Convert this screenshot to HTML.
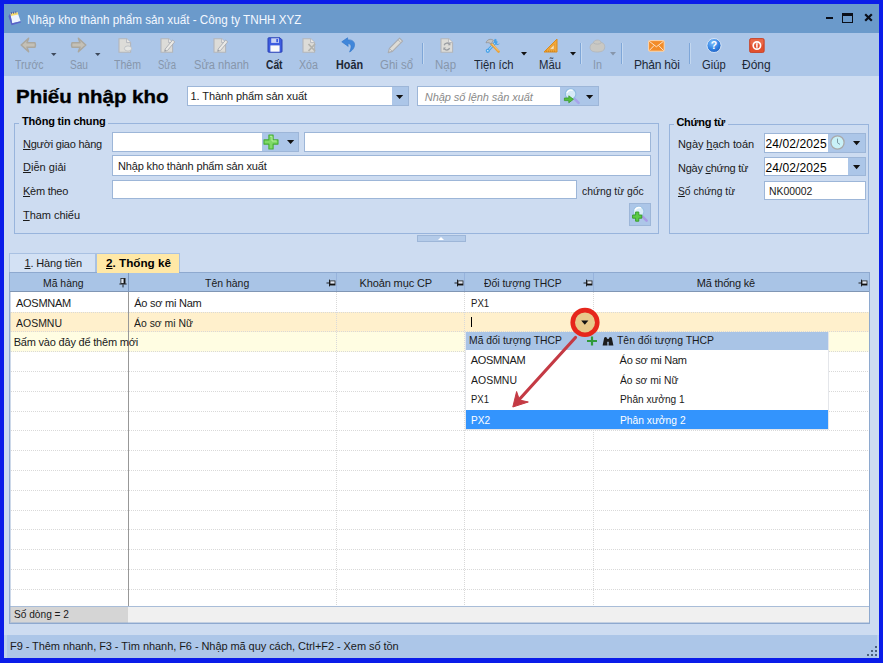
<!DOCTYPE html>
<html lang="vi"><head><meta charset="utf-8"><title>Nhập kho thành phẩm sản xuất - Công ty TNHH XYZ</title>
<style>
html,body{margin:0;padding:0;}
body{width:883px;height:663px;overflow:hidden;background:#0a1ce9;font-family:"Liberation Sans", sans-serif;font-size:11px;position:relative;}
#app div,#app span,#app svg{position:absolute;}
#app .t{line-height:20px;height:20px;white-space:nowrap;}
#app u{text-decoration:underline;}
</style></head>
<body><div id="app" style="position:absolute;left:0;top:0;width:883px;height:663px;overflow:hidden;">
<div style="left:4px;top:4px;width:875px;height:654px;background:#cddcf1;"></div>
<div style="left:4px;top:4px;width:875px;height:29px;background:#6b9acb;"></div>
<div style="left:4px;top:33px;width:875px;height:42.5px;background:#acc6e8;"></div>
<div style="left:4px;top:634.5px;width:875px;height:23.5px;background:#bdd1ec;"></div>
<div style="left:6.5px;top:634.5px;width:870.5px;height:23.5px;background:#acc6e8;"></div>
<div style="left:826px;top:17px;width:7px;height:2px;background:#0a0f1a;"></div>
<div style="left:842px;top:13px;width:11px;height:10px;border:1px solid #0a0f1a;border-top:3px solid #0a0f1a;box-sizing:border-box;"></div>
<svg style="left:864px;top:13px" width="9" height="9" viewBox="0 0 9 9"><path d="M1.2 1.2 L7.8 7.8 M7.8 1.2 L1.2 7.8" stroke="#0a0f1a" stroke-width="2.2" fill="none"/></svg>
<div style="left:422px;top:43px;width:1px;height:21px;background:#7ea6d8;"></div>
<div style="left:423px;top:43px;width:1px;height:21px;background:#c4d8f0;"></div>
<div style="left:580px;top:43px;width:1px;height:21px;background:#7ea6d8;"></div>
<div style="left:581px;top:43px;width:1px;height:21px;background:#c4d8f0;"></div>
<div style="left:621px;top:43px;width:1px;height:21px;background:#7ea6d8;"></div>
<div style="left:622px;top:43px;width:1px;height:21px;background:#c4d8f0;"></div>
<div style="left:689px;top:43px;width:1px;height:21px;background:#7ea6d8;"></div>
<div style="left:690px;top:43px;width:1px;height:21px;background:#c4d8f0;"></div>
<svg style="left:50.05px;top:52px" width="7.5" height="5" viewBox="0 0 7.5 5"><path d="M1 1 H6.5 L3.75 4 Z" fill="#3e4a5c"/></svg>
<svg style="left:93.75px;top:52px" width="7.5" height="5" viewBox="0 0 7.5 5"><path d="M1 1 H6.5 L3.75 4 Z" fill="#3e4a5c"/></svg>
<svg style="left:520px;top:51.1px" width="8" height="5.4" viewBox="0 0 8 5.4"><path d="M1 1 H7 L4 4.4 Z" fill="#111"/></svg>
<svg style="left:568.8px;top:51.1px" width="8" height="5.4" viewBox="0 0 8 5.4"><path d="M1 1 H7 L4 4.4 Z" fill="#111"/></svg>
<svg style="left:609px;top:51.1px" width="8" height="5.4" viewBox="0 0 8 5.4"><path d="M1 1 H7 L4 4.4 Z" fill="#8796ab"/></svg>
<div style="left:187px;top:86px;width:221.5px;height:20px;background:#fff;border:1px solid #9db6d8;box-sizing:border-box;"></div>
<div style="left:391.5px;top:87px;width:16px;height:18px;background:#acc6e8;"></div>
<svg style="left:395px;top:94px" width="9.2" height="6" viewBox="0 0 9.2 6"><path d="M1 1 H8.2 L4.6 5 Z" fill="#111"/></svg>
<div style="left:416.7px;top:86px;width:182px;height:20px;background:#acc6e8;border:1px solid #9db6d8;box-sizing:border-box;"></div>
<div style="left:417.7px;top:87px;width:142.3px;height:18px;background:#fff;"></div>
<svg style="left:585px;top:94px" width="9.2" height="6" viewBox="0 0 9.2 6"><path d="M1 1 H8.2 L4.6 5 Z" fill="#111"/></svg>
<div style="left:14px;top:123px;width:645px;height:111px;border:1px solid #98b4dc;box-sizing:border-box;"></div>
<div style="left:19px;top:116px;width:89px;height:14px;background:#cddcf1;"></div>
<div style="left:112px;top:132px;width:187px;height:20px;background:#acc6e8;border:1px solid #9db6d8;box-sizing:border-box;"></div>
<div style="left:113px;top:133px;width:149px;height:18px;background:#fff;"></div>
<svg style="left:286.1px;top:139.3px" width="9.2" height="6" viewBox="0 0 9.2 6"><path d="M1 1 H8.2 L4.6 5 Z" fill="#111"/></svg>
<div style="left:304px;top:132px;width:347px;height:20px;background:#fff;border:1px solid #9db6d8;box-sizing:border-box;"></div>
<div style="left:112px;top:155px;width:539px;height:21px;background:#fff;border:1px solid #9db6d8;box-sizing:border-box;"></div>
<div style="left:112px;top:180px;width:465px;height:19px;background:#fff;border:1px solid #9db6d8;box-sizing:border-box;"></div>
<div style="left:629px;top:203px;width:22px;height:22.5px;background:#acc6e8;border:1px solid #9db6d8;box-sizing:border-box;"></div>
<div style="left:416.5px;top:235px;width:49.5px;height:7px;background:#b4cbe9;border:1px solid #9db6d8;box-sizing:border-box;"></div>
<div style="left:437.5px;top:237px;width:0;height:0;border-left:3.5px solid transparent;border-right:3.5px solid transparent;border-bottom:3.5px solid #fff;"></div>
<div style="left:669px;top:124px;width:200px;height:110px;border:1px solid #98b4dc;box-sizing:border-box;"></div>
<div style="left:673.5px;top:118px;width:54.5px;height:14px;background:#cddcf1;"></div>
<div style="left:763.5px;top:133px;width:102.5px;height:19.5px;background:#acc6e8;border:1px solid #9db6d8;box-sizing:border-box;"></div>
<div style="left:764.5px;top:134px;width:63.5px;height:17.5px;background:#fff;"></div>
<svg style="left:852.1px;top:140.3px" width="9.2" height="6.2" viewBox="0 0 9.2 6.2"><path d="M1 1 H8.2 L4.6 5.2 Z" fill="#111"/></svg>
<div style="left:763.5px;top:156.5px;width:102.5px;height:19.5px;background:#acc6e8;border:1px solid #9db6d8;box-sizing:border-box;"></div>
<div style="left:764.5px;top:157.5px;width:83.5px;height:17.5px;background:#fff;"></div>
<svg style="left:852.1px;top:163.8px" width="9.2" height="6.2" viewBox="0 0 9.2 6.2"><path d="M1 1 H8.2 L4.6 5.2 Z" fill="#111"/></svg>
<div style="left:763.5px;top:180.5px;width:102.5px;height:19.5px;background:#fff;border:1px solid #9db6d8;box-sizing:border-box;"></div>
<div style="left:9px;top:253px;width:86.5px;height:20px;background:#d3e1f4;border:1px solid #a9c1e2;border-bottom:none;box-sizing:border-box;"></div>
<div style="left:95.5px;top:253px;width:84.5px;height:20.5px;background:#ffe8a6;border:1px solid #a9c1e2;border-bottom:none;box-sizing:border-box;"></div>
<div style="left:9px;top:272px;width:860.5px;height:351.5px;background:#fff;"></div>
<div style="left:9px;top:272px;width:860.5px;height:20.3px;background:#a9c4e6;border-bottom:1px solid #8096b4;box-sizing:border-box;"></div>
<div style="left:9px;top:312.1px;width:860.5px;height:19.8px;background:#fff0cc;"></div>
<div style="left:9px;top:331.9px;width:860.5px;height:19.8px;background:#fffde2;"></div>
<div style="left:9px;top:311.6px;width:860.5px;height:1px;border-top:1px dotted #d9d9d9;"></div>
<div style="left:9px;top:331.4px;width:860.5px;height:1px;border-top:1px dotted #d9d9d9;"></div>
<div style="left:9px;top:351.2px;width:860.5px;height:1px;border-top:1px dotted #d9d9d9;"></div>
<div style="left:9px;top:371px;width:860.5px;height:1px;border-top:1px dotted #d9d9d9;"></div>
<div style="left:9px;top:390.8px;width:860.5px;height:1px;border-top:1px dotted #d9d9d9;"></div>
<div style="left:9px;top:410.6px;width:860.5px;height:1px;border-top:1px dotted #d9d9d9;"></div>
<div style="left:9px;top:430.4px;width:860.5px;height:1px;border-top:1px dotted #d9d9d9;"></div>
<div style="left:9px;top:450.2px;width:860.5px;height:1px;border-top:1px dotted #d9d9d9;"></div>
<div style="left:9px;top:470px;width:860.5px;height:1px;border-top:1px dotted #d9d9d9;"></div>
<div style="left:9px;top:489.8px;width:860.5px;height:1px;border-top:1px dotted #d9d9d9;"></div>
<div style="left:9px;top:509.6px;width:860.5px;height:1px;border-top:1px dotted #d9d9d9;"></div>
<div style="left:9px;top:529.4px;width:860.5px;height:1px;border-top:1px dotted #d9d9d9;"></div>
<div style="left:9px;top:549.2px;width:860.5px;height:1px;border-top:1px dotted #d9d9d9;"></div>
<div style="left:9px;top:569px;width:860.5px;height:1px;border-top:1px dotted #d9d9d9;"></div>
<div style="left:9px;top:588.8px;width:860.5px;height:1px;border-top:1px dotted #d9d9d9;"></div>
<div style="left:335.8px;top:292.3px;width:1px;height:313.2px;border-left:1px dotted #d9d9d9;"></div>
<div style="left:335.8px;top:273px;width:1px;height:18.3px;background:#97b3dc;"></div>
<div style="left:464.2px;top:292.3px;width:1px;height:313.2px;border-left:1px dotted #d9d9d9;"></div>
<div style="left:464.2px;top:273px;width:1px;height:18.3px;background:#97b3dc;"></div>
<div style="left:592.5px;top:292.3px;width:1px;height:313.2px;border-left:1px dotted #d9d9d9;"></div>
<div style="left:592.5px;top:273px;width:1px;height:18.3px;background:#97b3dc;"></div>
<div style="left:127.5px;top:292.3px;width:1.5px;height:331.2px;background:#989898;"></div>
<div style="left:127.5px;top:272px;width:1.5px;height:20.3px;background:#7b97bf;"></div>
<div style="left:9px;top:605.5px;width:860.5px;height:18px;background:#f0f0f0;border-top:1px solid #a9bdd8;box-sizing:border-box;"></div>
<div style="left:9px;top:606.5px;width:118.5px;height:17px;background:#d5d5d5;"></div>
<div style="left:9px;top:272px;width:860.5px;height:351.5px;border:1px solid #8ea9cf;box-sizing:border-box;"></div>
<div style="left:10px;top:292.3px;width:1px;height:330.2px;background:rgba(142,169,207,0.45);"></div>
<div style="left:10px;top:621.5px;width:858.5px;height:1px;background:rgba(142,169,207,0.45);"></div>
<div style="left:96.5px;top:271px;width:82.5px;height:2.4px;background:#ffe8a6;"></div>
<div style="left:470.5px;top:316.5px;width:1px;height:10.5px;background:#000;"></div>
<div style="left:575px;top:313px;width:18px;height:18.5px;background:#e6c88c;"></div>
<svg style="left:580.5px;top:319.5px" width="9" height="6" viewBox="0 0 9 6"><path d="M1 1 H8 L4.5 5 Z" fill="#111"/></svg>
<div style="left:465px;top:331.6px;width:364px;height:98.9px;background:#fff;border:1px solid #e4e6ea;box-sizing:border-box;"></div>
<div style="left:466px;top:331.6px;width:362px;height:18.2px;background:#a9c4e6;"></div>
<div style="left:466px;top:409.5px;width:362px;height:19.9px;background:#3394fd;"></div>
<svg style="left:0;top:0" width="883" height="663" viewBox="0 0 883 663"><circle cx="585" cy="322.4" r="12.3" fill="#e8c98b" stroke="#e6261c" stroke-width="4.6"/><path d="M581.2 320.6 h7.2 l-3.6 4.2 Z" fill="#111"/><path d="M575.5 337.5 L517 402" stroke="#c43a44" stroke-width="3.2" fill="none" stroke-linecap="round"/><path d="M516.6 391.5 L512.8 407 L528.3 402 L519.5 400 Z" fill="#c43a44" stroke="#c43a44" stroke-width="1" stroke-linejoin="round"/></svg>
<div style="left:874.5px;top:654px;width:2px;height:2px;background:#4a607e;"></div>
<div style="left:870.5px;top:654px;width:2px;height:2px;background:#4a607e;"></div>
<div style="left:866.5px;top:654px;width:2px;height:2px;background:#4a607e;"></div>
<div style="left:874.5px;top:650px;width:2px;height:2px;background:#4a607e;"></div>
<div style="left:870.5px;top:650px;width:2px;height:2px;background:#4a607e;"></div>
<div style="left:874.5px;top:646px;width:2px;height:2px;background:#4a607e;"></div>
<svg style="left:7px;top:10px" width="15" height="17" viewBox="0 0 15 17"><path d="M3.2 3.5 L10.5 2.2 L13.6 11.2 L5.2 13.2 Z" fill="#eef4ff"/><path d="M3.2 3.5 L10.5 2.2 L11.2 4.4 L3.9 6 Z" fill="#f7dc6a"/><path d="M3.2 3.5 L5.2 13.2 L13.6 11.2 L13.9 12.6 L4.6 15.3 L1.4 6.2 Z" fill="#5a62c8"/><path d="M4.4 2.2 v2 M6.6 1.8 v2 M8.8 1.4 v2" stroke="#4a4f9a" stroke-width="0.9"/></svg>
<svg style="left:20px;top:37px" width="17" height="16" viewBox="0 0 17 16"><path d="M8.6 1.2 L1.2 8 L8.6 14.8 L7 10.2 L15 10.2 Q16 8 15 5.8 L7 5.8 Z" fill="#c4c0b6" stroke="#aaa79f" stroke-width="1.5" stroke-linejoin="round"/></svg>
<svg style="left:69.5px;top:37px" width="17" height="16" viewBox="0 0 17 16"><path d="M8.4 1.2 L15.8 8 L8.4 14.8 L10 10.2 L2 10.2 Q1 8 2 5.8 L10 5.8 Z" fill="#c4c0b6" stroke="#aaa79f" stroke-width="1.5" stroke-linejoin="round"/></svg>
<svg style="left:118px;top:38px" width="15" height="15" viewBox="0 0 15 15"><path d="M1 0.7 H8.6 L12.6 4.6 V14.2 H1 Z" fill="#dddcd8" stroke="#b3b6bb" stroke-width="1.1"/><path d="M8.6 0.7 V4.6 H12.6" fill="#ecebe8" stroke="#b3b6bb" stroke-width="0.9"/><ellipse cx="10" cy="10.5" rx="3.6" ry="2.6" fill="#e6e6e3" stroke="#b9bcc0" stroke-width="0.8"/></svg>
<svg style="left:159.5px;top:38px" width="15" height="15" viewBox="0 0 15 15"><path d="M1 0.7 H8.6 L12.6 4.6 V14.2 H1 Z" fill="#dddcd8" stroke="#b3b6bb" stroke-width="1.1"/><path d="M8.6 0.7 V4.6 H12.6" fill="#ecebe8" stroke="#b3b6bb" stroke-width="0.9"/><path d="M5.2 11 L12.6 2 L14.8 3.8 L7.4 12.6 L4.6 13.4 Z" fill="#ebeae6" stroke="#a9adb3" stroke-width="0.9" stroke-linejoin="round"/><path d="M4.6 13.4 L5 11.6 L6.6 12.8 Z" fill="#9a9da2"/></svg>
<svg style="left:213px;top:38px" width="15" height="15" viewBox="0 0 15 15"><path d="M1 0.7 H8.6 L12.6 4.6 V14.2 H1 Z" fill="#dddcd8" stroke="#b3b6bb" stroke-width="1.1"/><path d="M8.6 0.7 V4.6 H12.6" fill="#ecebe8" stroke="#b3b6bb" stroke-width="0.9"/><path d="M5.2 11 L12.6 2 L14.8 3.8 L7.4 12.6 L4.6 13.4 Z" fill="#ebeae6" stroke="#a9adb3" stroke-width="0.9" stroke-linejoin="round"/><path d="M4.6 13.4 L5 11.6 L6.6 12.8 Z" fill="#9a9da2"/></svg>
<svg style="left:266.5px;top:37px" width="16" height="16" viewBox="0 0 16 16"><path d="M1 1.5 Q1 0.8 1.8 0.8 H13 L15 2.8 V14.4 Q15 15.2 14.2 15.2 H1.8 Q1 15.2 1 14.4 Z" fill="#3d5ce0" stroke="#2a41b4" stroke-width="1"/><rect x="4.2" y="1.3" width="7.8" height="4.6" fill="#c9d3f4"/><rect x="9.3" y="2" width="1.8" height="3.2" fill="#3d5ce0"/><rect x="3.4" y="8.4" width="9.2" height="6.3" fill="#fafafa"/></svg>
<svg style="left:302px;top:38px" width="15" height="15" viewBox="0 0 15 15"><path d="M1 0.7 H8.6 L12.6 4.6 V14.2 H1 Z" fill="#dddcd8" stroke="#b3b6bb" stroke-width="1.1"/><path d="M8.6 0.7 V4.6 H12.6" fill="#ecebe8" stroke="#b3b6bb" stroke-width="0.9"/><path d="M6.5 6 L13 13 M13 6 L6.5 13" stroke="#b3b3ae" stroke-width="1.8"/></svg>
<svg style="left:341px;top:37px" width="16" height="16" viewBox="0 0 16 16"><path d="M6.6 0.8 L0.8 4.8 L7.2 9.4 L6.8 6.8 C10 6.4 11.4 9 8.6 15 C15.4 11.4 15.6 2 6.7 3 Z" fill="#3f86da" stroke="#3378cc" stroke-width="0.7" stroke-linejoin="round"/></svg>
<svg style="left:387px;top:36.5px" width="17" height="17" viewBox="0 0 17 17"><path d="M1.2 15.6 L2.4 11.4 L12.6 1.2 L15.6 4.2 L5.4 14.4 Z" fill="#dedcd6" stroke="#a9acb2" stroke-width="1.1" stroke-linejoin="round"/><path d="M2.4 11.4 L5.4 14.4 M11 2.8 L14 5.8" stroke="#a9acb2" stroke-width="0.8"/></svg>
<svg style="left:439.5px;top:38px" width="15" height="15" viewBox="0 0 15 15"><path d="M1 0.7 H8.6 L12.6 4.6 V14.2 H1 Z" fill="#dddcd8" stroke="#b3b6bb" stroke-width="1.1"/><path d="M8.6 0.7 V4.6 H12.6" fill="#ecebe8" stroke="#b3b6bb" stroke-width="0.9"/><path d="M4.2 7.2 A3 3 0 0 1 9.6 6.4 M9.6 10 A3 3 0 0 1 4.2 10.6" fill="none" stroke="#9a9da2" stroke-width="1.3"/><path d="M10.4 4.6 V7.2 H7.8 Z M3.4 12.2 V9.6 H6 Z" fill="#9a9da2"/></svg>
<svg style="left:484.5px;top:38px" width="16" height="15" viewBox="0 0 16 15"><path d="M2.6 13 L11 4" stroke="#4aa3e8" stroke-width="3" stroke-linecap="round"/><path d="M2.8 12.8 L10.8 4.2" stroke="#bfe0fa" stroke-width="1" stroke-linecap="round"/><path d="M10 0.8 A3.4 3.4 0 1 0 15 5.6 L12.6 6 L11 4.4 L11.6 1.6 Z" fill="#4aa3e8"/><circle cx="2.8" cy="12.8" r="2.1" fill="#4aa3e8"/><circle cx="2.8" cy="12.8" r="0.8" fill="#e4f2ff"/><path d="M6.2 5.6 L13.6 13.6" stroke="#e9a23c" stroke-width="2.5" stroke-linecap="round"/><path d="M6.6 5.4 L13.4 12.8" stroke="#f7cf86" stroke-width="0.8" stroke-linecap="round"/><path d="M1 4.8 C2 1.4 5.6 0.4 8.4 2.2 L6 6.2 C4.8 4.6 3.2 4.4 1 4.8 Z" fill="#c2c2c2" stroke="#8c8c8c" stroke-width="0.7"/></svg>
<svg style="left:543px;top:38px" width="16" height="15" viewBox="0 0 16 15"><path d="M14 1 V14 H1 Z" fill="#f2a737" stroke="#d98a1e" stroke-width="1" stroke-linejoin="round"/><path d="M11.2 6.4 V11.4 H6.2 Z" fill="#fbe3b4" stroke="#d98a1e" stroke-width="0.6"/><path d="M3.5 14 v-1.6 M5.5 14 v-1.6 M7.5 14 v-1.6 M9.5 14 v-1.6 M11.5 14 v-1.6" stroke="#c77a12" stroke-width="0.6"/></svg>
<svg style="left:589px;top:38px" width="17" height="15" viewBox="0 0 17 15"><path d="M4.5 5 C4.5 1.4 11.5 0.8 12.2 4.6 C15.8 4.8 16.8 9.4 14.6 12.2 C12 14.6 4.8 14.6 2.4 12.6 C-0.2 10 1.2 5.6 4.5 5 Z" fill="#c9c8c3" stroke="#b3b5b8" stroke-width="0.8"/><path d="M4.8 5.2 C7 6.6 10.4 6.4 12.2 4.8" fill="none" stroke="#b0b2b5" stroke-width="0.8"/></svg>
<svg style="left:648px;top:40px" width="17" height="12" viewBox="0 0 17 12"><rect x="0.6" y="0.6" width="15.6" height="10.6" rx="0.8" fill="#f28c28" stroke="#fbd7b0" stroke-width="1"/><path d="M1.2 1.2 L8.4 6.8 L15.6 1.2 M1.2 10.6 L6.2 5.4 M15.6 10.6 L10.6 5.4" fill="none" stroke="#fde3c8" stroke-width="1"/></svg>
<svg style="left:705.5px;top:37.5px" width="16" height="15" viewBox="0 0 16 15"><defs><radialGradient id="gh" cx="0.4" cy="0.3" r="0.8"><stop offset="0" stop-color="#7fc0ff"/><stop offset="0.6" stop-color="#2f7fe0"/><stop offset="1" stop-color="#1c56b8"/></radialGradient></defs><circle cx="8" cy="7.5" r="7" fill="url(#gh)" stroke="#e8f1fb" stroke-width="0.8"/><text x="8" y="11.4" text-anchor="middle" font-family="Liberation Sans, sans-serif" font-weight="bold" font-size="10.5" fill="#ffffff">?</text></svg>
<svg style="left:749px;top:38px" width="16" height="15" viewBox="0 0 16 15"><rect x="0.6" y="0.5" width="14.6" height="14" rx="1.6" fill="#e2502e" stroke="#c53c20" stroke-width="0.8"/><rect x="1.4" y="1.2" width="13" height="5.5" rx="1.2" fill="#ee7a5c" opacity="0.6"/><circle cx="7.9" cy="7.5" r="3.7" fill="none" stroke="#fff" stroke-width="1.7"/><path d="M7.9 5.3 V9.7" stroke="#fff" stroke-width="1.5"/></svg>
<svg style="left:562.5px;top:87.5px" width="18" height="17" viewBox="0 0 18 17"><path d="M11.6 10.8 L15.6 14.8" stroke="#a7a4ea" stroke-width="2.6" stroke-linecap="round"/><circle cx="7.6" cy="6" r="5.3" fill="#d6eaf7" stroke="#8fbbe0" stroke-width="1.1"/><path d="M4 5 A4 4 0 0 1 9.6 2.4" fill="none" stroke="#fff" stroke-width="1.2"/><path d="M1.4 10 H5.8 V7.8 L10.4 11.3 L5.8 14.8 V12.6 H1.4 Z" fill="#55bf3f" stroke="#3a9a2c" stroke-width="0.8" stroke-linejoin="round"/></svg>
<svg style="left:262.5px;top:133.5px" width="16" height="16" viewBox="0 0 16 16"><path d="M5.9 1 H10.1 V5.9 H15 V10.1 H10.1 V15 H5.9 V10.1 H1 V5.9 H5.9 Z" fill="#7fd966" stroke="#45ad34" stroke-width="1.1" stroke-linejoin="round"/><path d="M7 2.4 H9 V7 H13.6" fill="none" stroke="#b4ee9f" stroke-width="1"/></svg>
<svg style="left:631px;top:205px" width="18" height="18" viewBox="0 0 18 18"><path d="M11.4 11.4 L15.6 15.6" stroke="#a99be6" stroke-width="2.6" stroke-linecap="round"/><circle cx="7.6" cy="6.6" r="5.3" fill="#d9ecf8" stroke="#9cc2e3" stroke-width="1.1"/><path d="M4.2 5.2 A4 4 0 0 1 10 3" fill="none" stroke="#fff" stroke-width="1.4"/><path d="M4.6 7 H7.8 V10 H10.8 V13.2 H7.8 V16.2 H4.6 V13.2 H1.6 V10 H4.6 Z" fill="#5ccb45" stroke="#339a28" stroke-width="0.9" stroke-linejoin="round"/></svg>
<svg style="left:829.5px;top:134.5px" width="15" height="15" viewBox="0 0 15 15"><circle cx="7.5" cy="7.5" r="6.6" fill="#c9f1f8" stroke="#a9a9a9" stroke-width="1.3"/><path d="M7.5 3.6 V7.8 L10 9.4" fill="none" stroke="#7c9aa6" stroke-width="1"/></svg>
<svg style="left:118.6px;top:277.7px" width="8" height="10" viewBox="0 0 8 10"><rect x="1.9" y="0.5" width="4.2" height="5" fill="#dfe7f3" stroke="#222" stroke-width="0.8"/><rect x="4.6" y="0.5" width="1.4" height="5" fill="#111"/><path d="M0.4 6 H7.6" stroke="#111" stroke-width="0.9"/><path d="M4 6.5 V9.4" stroke="#111" stroke-width="0.9"/></svg>
<svg style="left:325.5px;top:278.6px" width="10" height="8" viewBox="0 0 10 8"><rect x="4" y="1.9" width="5" height="4.2" fill="#dfe7f3" stroke="#222" stroke-width="0.8"/><rect x="4" y="4.6" width="5" height="1.4" fill="#111"/><path d="M3.5 0.6 V7.4" stroke="#111" stroke-width="0.9"/><path d="M0.5 4 H3.5" stroke="#111" stroke-width="0.9"/></svg>
<svg style="left:454.3px;top:278.6px" width="10" height="8" viewBox="0 0 10 8"><rect x="4" y="1.9" width="5" height="4.2" fill="#dfe7f3" stroke="#222" stroke-width="0.8"/><rect x="4" y="4.6" width="5" height="1.4" fill="#111"/><path d="M3.5 0.6 V7.4" stroke="#111" stroke-width="0.9"/><path d="M0.5 4 H3.5" stroke="#111" stroke-width="0.9"/></svg>
<svg style="left:583px;top:278.6px" width="10" height="8" viewBox="0 0 10 8"><rect x="4" y="1.9" width="5" height="4.2" fill="#dfe7f3" stroke="#222" stroke-width="0.8"/><rect x="4" y="4.6" width="5" height="1.4" fill="#111"/><path d="M3.5 0.6 V7.4" stroke="#111" stroke-width="0.9"/><path d="M0.5 4 H3.5" stroke="#111" stroke-width="0.9"/></svg>
<svg style="left:858px;top:278.6px" width="10" height="8" viewBox="0 0 10 8"><rect x="4" y="1.9" width="5" height="4.2" fill="#dfe7f3" stroke="#222" stroke-width="0.8"/><rect x="4" y="4.6" width="5" height="1.4" fill="#111"/><path d="M3.5 0.6 V7.4" stroke="#111" stroke-width="0.9"/><path d="M0.5 4 H3.5" stroke="#111" stroke-width="0.9"/></svg>
<svg style="left:586px;top:335.5px" width="12" height="10" viewBox="0 0 12 10"><path d="M6 0.6 V9.4 M1 5 H11" stroke="#2f9a3b" stroke-width="2.2"/></svg>
<svg style="left:602px;top:335.8px" width="12" height="10" viewBox="0 0 12 10"><path d="M0.6 9.6 L2.2 1.8 Q3.5 0.2 4.9 1.8 L5.5 9.6 Z M6.5 9.6 L7.1 1.8 Q8.5 0.2 9.8 1.8 L11.4 9.6 Z" fill="#1c1c1c"/><rect x="4.6" y="2.8" width="2.8" height="3" fill="#1c1c1c"/></svg>
<span class="t" style="left:27.2px;top:10px;font-size:12.5px;color:#f4f8ff;transform:scaleX(0.9347);transform-origin:0 50%;">Nhập kho thành phẩm sản xuất - Công ty TNHH XYZ</span>
<span class="t" style="left:14.5px;top:55px;font-size:12px;color:#8796ab;transform:scaleX(0.8690);transform-origin:0 50%;">Trước</span>
<span class="t" style="left:69.5px;top:55px;font-size:12px;color:#8796ab;transform:scaleX(0.8427);transform-origin:0 50%;">Sau</span>
<span class="t" style="left:114px;top:55px;font-size:12px;color:#8796ab;transform:scaleX(0.8798);transform-origin:0 50%;">Thêm</span>
<span class="t" style="left:158px;top:55px;font-size:12px;color:#8796ab;transform:scaleX(0.7923);transform-origin:0 50%;">Sửa</span>
<span class="t" style="left:194px;top:55px;font-size:12px;color:#8796ab;transform:scaleX(0.9256);transform-origin:0 50%;">Sửa nhanh</span>
<span class="t" style="left:265.5px;top:55px;font-size:12px;color:#1c2836;font-weight:bold;transform:scaleX(0.8530);transform-origin:0 50%;">Cất</span>
<span class="t" style="left:299px;top:55px;font-size:12px;color:#8796ab;transform:scaleX(0.8895);transform-origin:0 50%;">Xóa</span>
<span class="t" style="left:335.5px;top:55px;font-size:12px;color:#1c2836;font-weight:bold;transform:scaleX(0.9000);transform-origin:0 50%;">Hoãn</span>
<span class="t" style="left:379.6px;top:55px;font-size:12px;color:#8796ab;transform:scaleX(0.9514);transform-origin:0 50%;">Ghi sổ</span>
<span class="t" style="left:435px;top:55px;font-size:12px;color:#8796ab;transform:scaleX(0.9539);transform-origin:0 50%;">Nạp</span>
<span class="t" style="left:474px;top:55px;font-size:12px;color:#1c2836;transform:scaleX(0.9373);transform-origin:0 50%;">Tiện ích</span>
<span class="t" style="left:539px;top:55px;font-size:12px;color:#1c2836;transform:scaleX(0.9424);transform-origin:0 50%;">Mẫu</span>
<span class="t" style="left:593px;top:55px;font-size:12px;color:#8796ab;transform:scaleX(0.8986);transform-origin:0 50%;">In</span>
<span class="t" style="left:634px;top:55px;font-size:12px;color:#1c2836;letter-spacing:-0.209px;">Phản hồi</span>
<span class="t" style="left:702.4px;top:55px;font-size:12px;color:#1c2836;transform:scaleX(0.9306);transform-origin:0 50%;">Giúp</span>
<span class="t" style="left:742px;top:55px;font-size:12px;color:#1c2836;letter-spacing:-0.022px;">Đóng</span>
<span class="t" style="left:16px;top:87px;font-size:19px;color:#000;font-weight:bold;transform:scaleX(1.0781);transform-origin:0 50%;-webkit-text-stroke:0.35px #000;">Phiếu nhập kho</span>
<span class="t" style="left:190.5px;top:86px;font-size:11px;color:#1a1a1a;letter-spacing:-0.088px;">1. Thành phẩm sản xuất</span>
<span class="t" style="left:424.8px;top:87px;font-size:11px;color:#8a8a8a;font-style:italic;letter-spacing:-0.070px;">Nhập số lệnh sản xuất</span>
<span class="t" style="left:22px;top:111px;font-size:11px;color:#000;font-weight:bold;letter-spacing:-0.177px;">Thông tin chung</span>
<span class="t" style="left:23px;top:134px;font-size:11px;color:#1a1a1a;letter-spacing:-0.232px;"><u>N</u>gười giao hàng</span>
<span class="t" style="left:23px;top:157px;font-size:11px;color:#1a1a1a;letter-spacing:0.021px;"><u>D</u>iễn giải</span>
<span class="t" style="left:23px;top:181px;font-size:11px;color:#1a1a1a;letter-spacing:-0.262px;"><u>K</u>èm theo</span>
<span class="t" style="left:23px;top:205px;font-size:11px;color:#1a1a1a;letter-spacing:-0.050px;"><u>T</u>ham chiếu</span>
<span class="t" style="left:118px;top:156px;font-size:11px;color:#1a1a1a;letter-spacing:-0.153px;">Nhập kho thành phẩm sản xuất</span>
<span class="t" style="left:582.3px;top:181px;font-size:11px;color:#1a1a1a;transform:scaleX(0.9422);transform-origin:0 50%;">chứng từ gốc</span>
<span class="t" style="left:676.4px;top:112px;font-size:11px;color:#000;font-weight:bold;letter-spacing:-0.271px;">Chứng từ</span>
<span class="t" style="left:678px;top:134px;font-size:11px;color:#1a1a1a;letter-spacing:-0.077px;">Ngày <u>h</u>ạch toán</span>
<span class="t" style="left:678px;top:158px;font-size:11px;color:#1a1a1a;letter-spacing:-0.250px;">Ngày <u>c</u>hứng từ</span>
<span class="t" style="left:678px;top:181px;font-size:11px;color:#1a1a1a;transform:scaleX(0.9311);transform-origin:0 50%;"><u>S</u>ố chứng từ</span>
<span class="t" style="left:765.5px;top:134px;font-size:12px;color:#000;letter-spacing:0.114px;">24/02/2025</span>
<span class="t" style="left:765.5px;top:158px;font-size:12px;color:#000;letter-spacing:0.114px;">24/02/2025</span>
<span class="t" style="left:768.6px;top:181px;font-size:11px;color:#1a1a1a;transform:scaleX(0.9460);transform-origin:0 50%;">NK00002</span>
<span class="t" style="left:24.5px;top:253px;font-size:11px;color:#1a1a1a;letter-spacing:-0.152px;"><u>1</u>. Hàng tiền</span>
<span class="t" style="left:106px;top:253px;font-size:11px;color:#000;font-weight:bold;transform:scaleX(1.0634);transform-origin:0 50%;"><u>2</u>. Thống kê</span>
<span class="t" style="left:14px;top:604px;font-size:11px;color:#1a1a1a;transform:scaleX(0.9222);transform-origin:0 50%;">Số dòng = 2</span>
<span class="t" style="left:43px;top:273px;font-size:11px;color:#1a1a1a;transform:scaleX(0.9460);transform-origin:0 50%;">Mã hàng</span>
<span class="t" style="left:204.8px;top:273px;font-size:11px;color:#1a1a1a;transform:scaleX(0.9509);transform-origin:0 50%;">Tên hàng</span>
<span class="t" style="left:359.5px;top:273px;font-size:11px;color:#1a1a1a;letter-spacing:-0.124px;">Khoản mục CP</span>
<span class="t" style="left:484.4px;top:273px;font-size:11px;color:#1a1a1a;transform:scaleX(0.9436);transform-origin:0 50%;">Đối tượng THCP</span>
<span class="t" style="left:696.7px;top:273px;font-size:11px;color:#1a1a1a;letter-spacing:-0.204px;">Mã thống kê</span>
<span class="t" style="left:16px;top:293px;font-size:11px;color:#1a1a1a;letter-spacing:-0.263px;">AOSMNAM</span>
<span class="t" style="left:134.2px;top:293px;font-size:11px;color:#1a1a1a;letter-spacing:-0.239px;">Áo sơ mi Nam</span>
<span class="t" style="left:470.8px;top:293px;font-size:11px;color:#1a1a1a;transform:scaleX(0.8751);transform-origin:0 50%;">PX1</span>
<span class="t" style="left:16px;top:313px;font-size:11px;color:#1a1a1a;transform:scaleX(0.9528);transform-origin:0 50%;">AOSMNU</span>
<span class="t" style="left:134.2px;top:313px;font-size:11px;color:#1a1a1a;transform:scaleX(0.9476);transform-origin:0 50%;">Áo sơ mi Nữ</span>
<span class="t" style="left:13.7px;top:332px;font-size:11px;color:#1a1a1a;letter-spacing:-0.200px;">Bấm vào đây để thêm mới</span>
<span class="t" style="left:469px;top:330px;font-size:11px;color:#1a1a1a;transform:scaleX(0.9418);transform-origin:0 50%;">Mã đối tượng THCP</span>
<span class="t" style="left:617px;top:330px;font-size:11px;color:#1a1a1a;transform:scaleX(0.9471);transform-origin:0 50%;">Tên đối tượng THCP</span>
<span class="t" style="left:470.8px;top:350px;font-size:11px;color:#1a1a1a;letter-spacing:-0.335px;">AOSMNAM</span>
<span class="t" style="left:619.6px;top:350px;font-size:11px;color:#1a1a1a;letter-spacing:-0.248px;">Áo sơ mi Nam</span>
<span class="t" style="left:470.8px;top:370px;font-size:11px;color:#1a1a1a;transform:scaleX(0.9528);transform-origin:0 50%;">AOSMNU</span>
<span class="t" style="left:619.6px;top:370px;font-size:11px;color:#1a1a1a;transform:scaleX(0.9363);transform-origin:0 50%;">Áo sơ mi Nữ</span>
<span class="t" style="left:470.8px;top:389px;font-size:11px;color:#1a1a1a;transform:scaleX(0.8655);transform-origin:0 50%;">PX1</span>
<span class="t" style="left:619.6px;top:389px;font-size:11px;color:#1a1a1a;transform:scaleX(0.9212);transform-origin:0 50%;">Phân xưởng 1</span>
<span class="t" style="left:470.8px;top:410px;font-size:11px;color:#fff;transform:scaleX(0.9136);transform-origin:0 50%;">PX2</span>
<span class="t" style="left:619.6px;top:410px;font-size:11px;color:#fff;transform:scaleX(0.9340);transform-origin:0 50%;">Phân xưởng 2</span>
<span class="t" style="left:10px;top:636px;font-size:11px;color:#1a1a1a;letter-spacing:-0.067px;">F9 - Thêm nhanh, F3 - Tìm nhanh, F6 - Nhập mã quy cách, Ctrl+F2 - Xem số tồn</span>
</div></body></html>
